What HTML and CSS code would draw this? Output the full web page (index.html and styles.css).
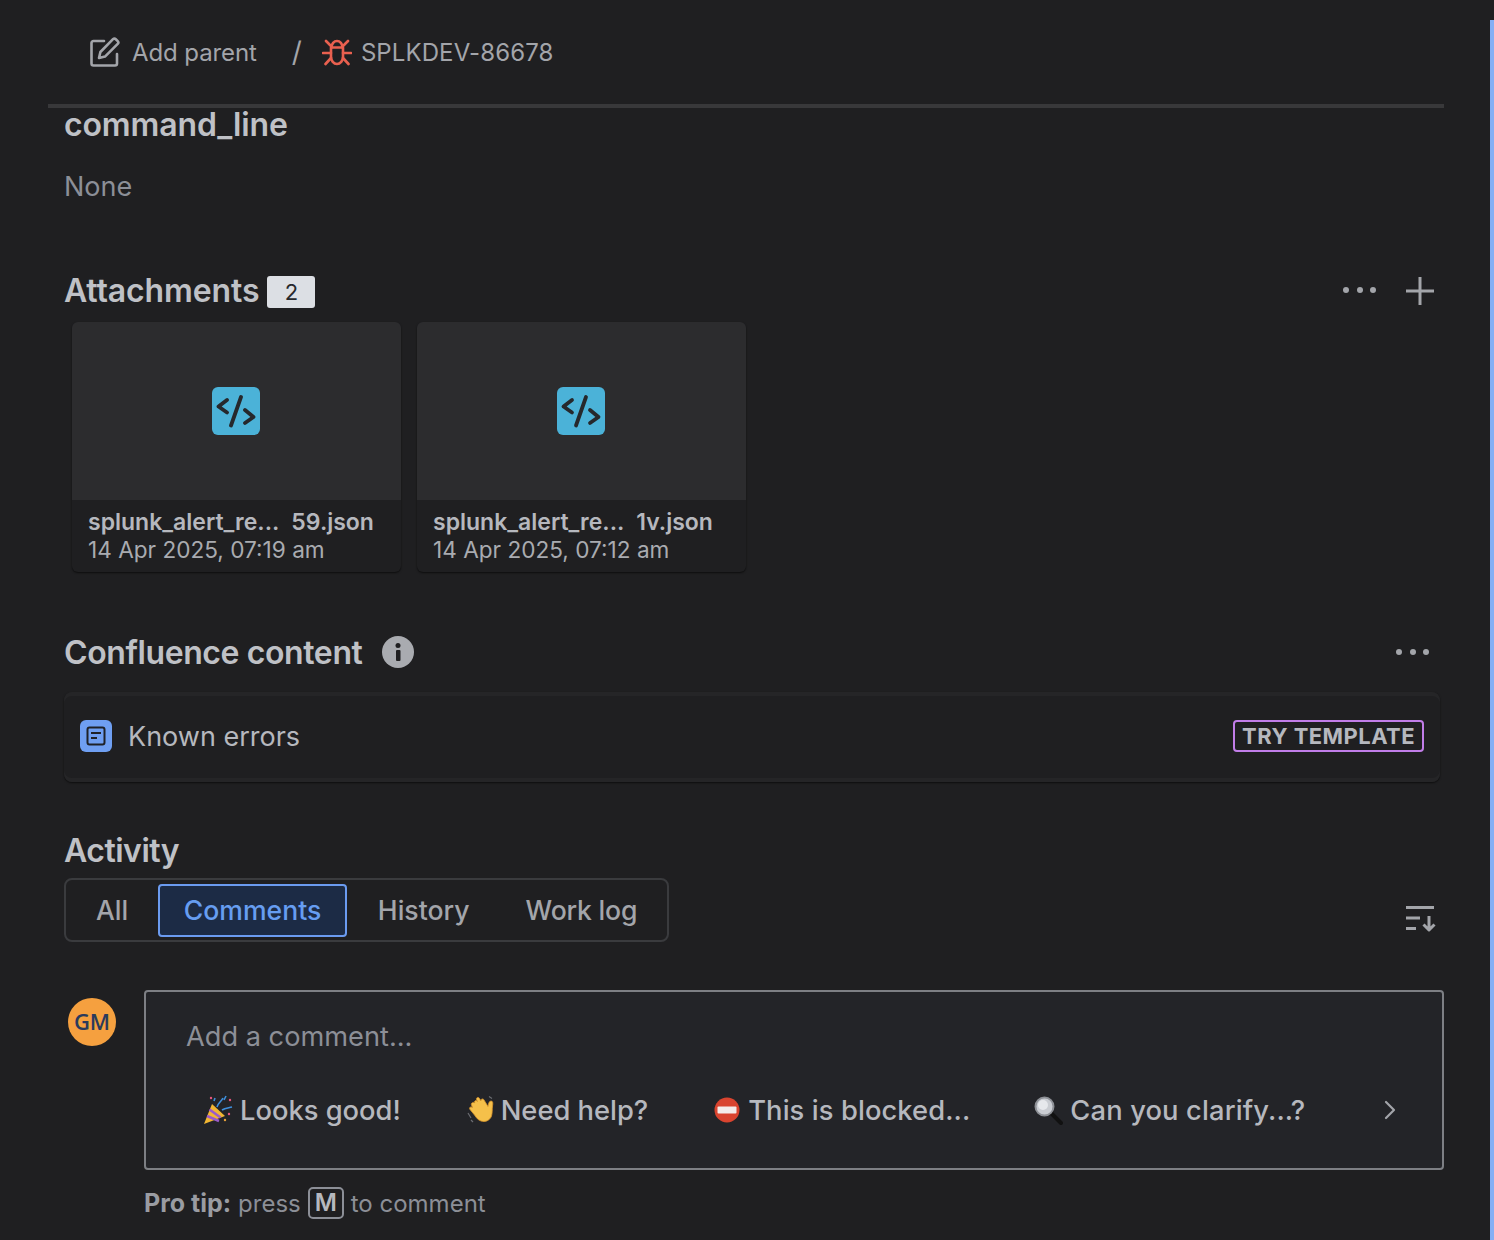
FILE: index.html
```html
<!DOCTYPE html>
<html lang="en">
<head>
    <meta charset="UTF-8">
    <meta name="viewport" content="width=device-width, initial-scale=1.0">
    <title>SPLKDEV-86678</title>
    <link rel="stylesheet" href="styles.css">
</head>
<body>
    <div class="page">
        <main class="issue">
            <header class="crumbs">
                <svg class="crumb-edit" width="30" height="30" viewBox="0 0 30 30" fill="none" stroke="#a3a5aa" stroke-width="2.6" stroke-linecap="round" stroke-linejoin="round">
                    <path d="M14 4H3.5A2 2 0 0 0 1.5 6v20.5a2 2 0 0 0 2 2H25a2 2 0 0 0 2-2V17"/>
                    <path d="M9 21l1.4-6L23 2.2a2 2 0 0 1 2.8 0l1.9 1.9a2 2 0 0 1 0 2.8L15 19.6z"/>
                </svg>
                <span class="crumb-text">Add parent</span>
                <span class="crumb-sep">/</span>
                <svg class="crumb-bug" width="30" height="27" viewBox="0 0 30 27" fill="none" stroke="#e9604f" stroke-width="2.6" stroke-linecap="round" stroke-linejoin="round">
                    <path d="M9 8.500h12v9.500a6 7 0 0 1-12 0z"/>
                    <path d="M9.500 8.500a5.500 6.500 0 0 1 11 0"/>
                    <path d="M4 2l5 5M26 2l-5 5M1 14h8M21 14h8M9 19l-5.500 6M21 19l5.500 6"/>
                </svg>
                <span class="crumb-text crumb-key">SPLKDEV-86678</span>
            </header>

            <div class="content">
                <h2 class="heading heading-first">command_line</h2>
                <p class="none-text">None</p>

                <div class="section-head attach-head">
                    <h2 class="heading attach-title">Attachments</h2>
                    <span class="badge">2</span>
                    <div class="section-actions">
                        <svg class="dots-up" width="34" height="6" viewBox="0 0 34 6" fill="#a3a5aa"><circle cx="3" cy="3" r="3"/><circle cx="17" cy="3" r="3"/><circle cx="30" cy="3" r="3"/></svg>
                        <svg class="plus" width="28" height="28" viewBox="0 0 28 28" stroke="#a3a5aa" stroke-width="3"><path d="M14 0v28M0 14h28"/></svg>
                    </div>
                </div>

                <div class="attachments">
                    <div class="attachment">
                        <div class="thumb">
                            <svg width="48" height="48" viewBox="0 0 48 48"><rect width="48" height="48" rx="6" fill="#4bb2d8"/><path d="M15 13l-8.500 6.500 8.500 6M33 23l8.500 7-8.500 6M29 10l-10 28.500" fill="none" stroke="#26282c" stroke-width="3.800" stroke-linecap="round" stroke-linejoin="round"/></svg>
                        </div>
                        <div class="attachment-info">
                            <div class="file-name"><span>splunk_alert_re...</span><span>59.json</span></div>
                            <div class="file-date">14 Apr 2025, 07:19 am</div>
                        </div>
                    </div>
                    <div class="attachment">
                        <div class="thumb">
                            <svg width="48" height="48" viewBox="0 0 48 48"><rect width="48" height="48" rx="6" fill="#4bb2d8"/><path d="M15 13l-8.500 6.500 8.500 6M33 23l8.500 7-8.500 6M29 10l-10 28.500" fill="none" stroke="#26282c" stroke-width="3.800" stroke-linecap="round" stroke-linejoin="round"/></svg>
                        </div>
                        <div class="attachment-info">
                            <div class="file-name"><span>splunk_alert_re...</span><span>1v.json</span></div>
                            <div class="file-date">14 Apr 2025, 07:12 am</div>
                        </div>
                    </div>
                </div>

                <div class="section-head confluence-head">
                    <h2 class="heading">Confluence content</h2>
                    <svg class="info" width="32" height="32" viewBox="0 0 32 32"><circle cx="16" cy="16" r="16" fill="#a9abb0"/><rect x="14" y="14" width="4.500" height="11" rx="1" fill="#1f1f21"/><circle cx="16" cy="9.500" r="2.500" fill="#1f1f21"/></svg>
                    <div class="section-actions">
                        <svg class="dots-only" width="34" height="6" viewBox="0 0 34 6" fill="#a3a5aa"><circle cx="3" cy="3" r="3"/><circle cx="17" cy="3" r="3"/><circle cx="30" cy="3" r="3"/></svg>
                    </div>
                </div>

                <div class="template-row">
                    <svg width="32" height="32" viewBox="0 0 32 32" fill="none"><rect width="32" height="32" rx="6" fill="#6f9ff2"/><rect x="7.500" y="7.500" width="17" height="17" rx="2" stroke="#1f2228" stroke-width="2"/><path d="M11 13h10M11 18h6" stroke="#1f2228" stroke-width="2"/></svg>
                    <span class="template-name">Known errors</span>
                    <span class="try-template">TRY TEMPLATE</span>
                </div>

                <h2 class="heading activity-title">Activity</h2>
                <div class="activity-bar">
                    <div class="tabs">
                        <span class="tab">All</span>
                        <span class="tab tab-active">Comments</span>
                        <span class="tab">History</span>
                        <span class="tab">Work log</span>
                    </div>
                    <svg class="sort" width="31" height="26" viewBox="0 0 31 26" fill="none" stroke="#a3a5aa" stroke-width="3"><path d="M0 1.500h28M0 12h14M0 22.500h10"/><path d="M23 10v14M17.500 18.500l5.500 5.500 5.500-5.500" stroke-linejoin="round"/></svg>
                </div>

                <div class="comment-row">
                    <div class="avatar">GM</div>
                    <div class="comment-col">
                        <div class="comment-box">
                            <div class="placeholder">Add a comment...</div>
                            <div class="quick-replies">
                                <span class="reply reply-good">
                                    <svg width="30" height="30" viewBox="0 0 30 30"><path d="M1 29l8-20 13 12z" fill="#f2b632"/><path d="M4 21l12 5M6.500 14.500l11 8" stroke="#9a5bc9" stroke-width="2.500" fill="none"/><path d="M14 12c1-4 4-5 6-9M19 15c3-2 6-2 10-3M12 3l-1 3M23 1l-2 4" stroke="#3f8fdc" stroke-width="1.600" fill="none"/><circle cx="26" cy="19" r="1.200" fill="#e8577c"/><circle cx="22" cy="25" r="1.200" fill="#e8a33c"/><circle cx="27" cy="5" r="1.200" fill="#e8577c"/><circle cx="8" cy="3" r="1.200" fill="#e8577c"/></svg>
                                    Looks good!
                                </span>
                                <span class="reply reply-help">
                                    <svg width="28" height="28" viewBox="0 0 28 28"><path d="M8 7c-1.500-2 1-3.500 2.500-1.500L9.500 3.500C9 1.500 11.500.5 12.500 2.500l1.500 2.500c-.5-2 2-3 3-1l4 6.500c.5-2.500 1-5.500 3-5.500s2 2.500 1.500 5c-.5 4 0 6.500-1 10-1.500 4.500-6.500 6.500-10.500 5-3-1-4.500-3-6.500-6L3 13.500c-1.500-2 1-3.500 2.500-2L4.500 9C3.500 7 6.500 5.500 8 7z" fill="#f5c04a" stroke="#d9962b" stroke-width=".8"/><path d="M1 17l3 5M4 24l2 2M22 .5l3 2" stroke="#6b6d72" stroke-width="1.200" fill="none"/></svg>
                                    Need help?
                                </span>
                                <span class="reply reply-blocked">
                                    <svg width="26" height="26" viewBox="0 0 26 26"><circle cx="13" cy="13" r="12.500" fill="#d9442f"/><rect x="3.500" y="9.500" width="19" height="7" rx="1" fill="#f4ecea"/></svg>
                                    This is blocked...
                                </span>
                                <span class="reply reply-clarify">
                                    <svg width="29" height="29" viewBox="0 0 29 29"><path d="M17 17l10 10" stroke="#111" stroke-width="4" stroke-linecap="round"/><circle cx="10.500" cy="10.500" r="9" fill="#c9ccd2" stroke="#8d9096" stroke-width="2"/><circle cx="9" cy="9" r="5" fill="#e6e8ec"/></svg>
                                    Can you clarify...?
                                </span>
                                <svg class="chevron" width="12" height="20" viewBox="0 0 12 20" fill="none" stroke="#a3a5aa" stroke-width="2.200" stroke-linecap="round" stroke-linejoin="round"><path d="M2 2l8 8-8 8"/></svg>
                            </div>
                        </div>
                        <div class="pro-tip"><b>Pro tip:</b> press <kbd class="key">M</kbd> to comment</div>
                    </div>
                </div>
            </div>
        </main>
        <div class="edge-strip"></div>
    </div>
</body>
</html>
```

FILE: styles.css
```css
* {
    box-sizing: border-box;
}
html, body {
    margin: 0;
    height: 100%;
}
body {
    font-family: Inter, "Noto Sans", sans-serif;
    background-color: #1f1f21;
    color: #b6b8be;
    overflow: hidden;
}
.page {
    display: flex;
    height: 1240px;
}
.issue {
    flex: 1;
    padding: 0 46px 0 48px;
}
.edge-strip {
    width: 4px;
    margin-top: 20px;
    background-color: #85aff5;
}

/* Breadcrumb */
.crumbs {
    display: flex;
    align-items: center;
    height: 108px;
    padding: 0 0 0 42px;
    border-bottom: 4px solid #38383a;
}
.crumb-edit {
    margin-right: 12px;
}
.crumb-text {
    font-size: 24px;
    letter-spacing: -0.1px;
    color: #a3a5aa;
}
.crumb-key {
    letter-spacing: 0.1px;
}
.crumb-sep {
    margin: 0 20px 0 35px;
    font-size: 28px;
    color: #a3a5aa;
}
.crumb-bug {
    margin-right: 9px;
}

.content {
    padding-left: 16px;
}
.heading {
    margin: 0;
    font-size: 32px;
    line-height: 40px;
    font-weight: 600;
    letter-spacing: -0.13px;
    color: #bfc1c6;
}
.heading-first {
    margin-top: -3px;
}
.none-text {
    margin: 24px 0 0;
    font-size: 27px;
    line-height: 36px;
    color: #8c8f97;
}

.section-head {
    display: flex;
    align-items: center;
}
.section-actions {
    display: flex;
    align-items: center;
    margin-left: auto;
}
.attach-head {
    margin-top: 66px;
}
.attach-title {
    margin-bottom: 2px;
}
.attach-head .section-actions {
    margin-top: -2px;
}
.dots-up {
    margin-bottom: 2px;
}
.badge {
    width: 48px;
    height: 32px;
    margin-left: 8px;
    border-radius: 3px;
    background-color: #dcdfe4;
    color: #26282c;
    font-size: 22px;
    line-height: 32px;
    text-align: center;
}
.plus {
    margin: 0 10px 0 29px;
}

/* Attachment cards */
.attachments {
    display: flex;
    gap: 16px;
    margin: 9px 0 0 8px;
}
.attachment {
    width: 329px;
    height: 250px;
    border-radius: 6px;
    overflow: hidden;
    background-color: #1f1f21;
    box-shadow: 0 1px 2px rgba(0, 0, 0, 0.6);
}
.thumb {
    display: flex;
    align-items: center;
    justify-content: center;
    height: 178px;
    padding-right: 2px;
    background-color: #2c2c2e;
}
.attachment-info {
    padding: 8px 16px;
    font-size: 23px;
    line-height: 28px;
}
.file-name {
    display: flex;
    gap: 12px;
    font-weight: 600;
    color: #b6b8be;
}
.file-date {
    font-size: 22.600px;
    color: #a9abb0;
}

.confluence-head {
    margin-top: 59px;
}
.confluence-head .heading {
    letter-spacing: -0.4px;
    padding-top: 2px;
}
.info {
    margin-left: 20px;
}
.dots-only {
    margin-right: 14px;
}

/* Template row */
.template-row {
    display: flex;
    align-items: center;
    width: 1376px;
    height: 90px;
    margin-top: 19px;
    padding: 0 16px 2px;
    border-radius: 8px;
    background-color: #1f1f21;
    box-shadow: inset 0 4px 0 #252527, inset 0 -4px 0 #252527, 0 1px 2px rgba(0, 0, 0, 0.6);
}
.template-name {
    margin-left: 16px;
    font-size: 27px;
    color: #b6b8be;
}
.try-template {
    margin-left: auto;
    height: 32px;
    padding: 0 7px;
    border: 2px solid #c17de8;
    border-radius: 4px;
    font-size: 22px;
    line-height: 28px;
    font-weight: 700;
    letter-spacing: 0.45px;
    color: #b6b8be;
}

/* Activity */
.activity-title {
    margin-top: 49px;
    letter-spacing: -0.5px;
}
.activity-bar {
    display: flex;
    align-items: flex-end;
    justify-content: space-between;
    margin-top: 7px;
}
.tabs {
    display: flex;
    align-items: center;
    width: 605px;
    height: 64px;
    padding: 0 4px;
    border: 2px solid #3a3b3e;
    border-radius: 8px;
}
.tab {
    padding: 0 31px;
    font-size: 26.600px;
    line-height: 52px;
    font-weight: 500;
    white-space: nowrap;
    color: #a3a5aa;
}
.tab:first-child {
    padding: 0 30px 0 26px;
}
.tab:last-child {
    padding-left: 25px;
    letter-spacing: -0.2px;
}
.tab-active {
    height: 53px;
    padding: 0 23.500px;
    border: 2px solid #6b9bf0;
    border-radius: 4px;
    line-height: 49px;
    background-color: #1c2b45;
    color: #669df1;
}
.sort {
    margin: 0 7px 10px 0;
}

/* Comment editor */
.comment-row {
    display: flex;
    margin-top: 48px;
}
.avatar {
    width: 48px;
    height: 48px;
    margin: 8px 28px 0 4px;
    border-radius: 50%;
    background-color: #f5a03f;
    color: #2a3a5c;
    font-family: "Open Sans", sans-serif;
    font-size: 22px;
    font-weight: 600;
    line-height: 46px;
    text-align: center;
}
.comment-col {
    flex: 1;
}
.comment-box {
    height: 180px;
    padding: 0 40px;
    border: 2px solid #7d7f84;
    border-radius: 4px;
    background-color: #232428;
}
.placeholder {
    margin-top: 27px;
    font-size: 27.200px;
    line-height: 36px;
    color: #8c8f97;
}
.quick-replies {
    display: flex;
    align-items: center;
    height: 40px;
    margin-top: 35px;
    font-size: 27.300px;
    font-weight: 500;
    color: #b6b8be;
}
.reply {
    display: flex;
    align-items: center;
    gap: 6px;
}
.reply-good {
    margin-left: 17px;
    gap: 7px;
}
.reply-help {
    margin-left: 66px;
}
.reply-blocked {
    margin-left: 66px;
    gap: 8px;
    letter-spacing: 0.1px;
}
.reply-clarify {
    margin-left: 64px;
    gap: 7px;
    letter-spacing: 0.15px;
}
.chevron {
    margin-left: auto;
    margin-right: 6px;
}
.pro-tip {
    display: flex;
    align-items: center;
    gap: 7px;
    margin-top: 17px;
    font-size: 24px;
    color: #8c8f97;
}
.pro-tip b {
    font-size: 25px;
    font-weight: 700;
    color: #9a9ca2;
}
.key {
    width: 36px;
    height: 32px;
    border: 2px solid #8c8f97;
    border-radius: 5px;
    font-family: Inter, sans-serif;
    font-size: 24px;
    line-height: 28px;
    font-weight: 600;
    text-align: center;
    color: #b6b8be;
}
```
